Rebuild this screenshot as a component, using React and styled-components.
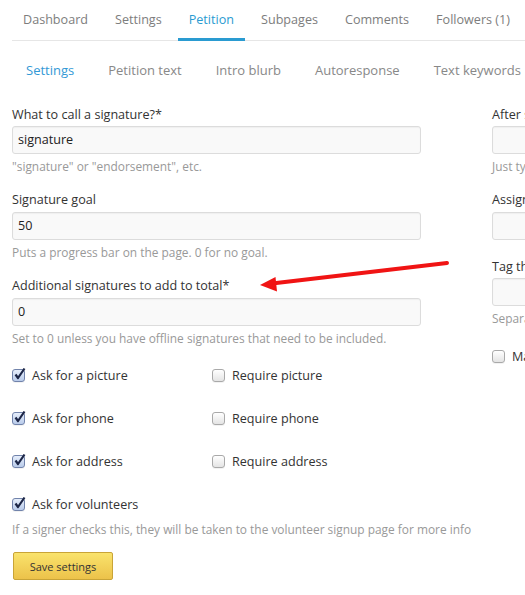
import React from "react";
import styled, { createGlobalStyle } from "styled-components";

const Global = createGlobalStyle`
  html, body { margin: 0; padding: 0; background: #fff; overflow: hidden; }
  body { font-family: "Open Sans", "DejaVu Sans", sans-serif; color: #333; width: 525px; height: 595px; }
  * { box-sizing: border-box; }
`;

const Page = styled.div`
  position: relative;
  width: 525px;
  height: 595px;
  overflow: hidden;
`;

const Nav = styled.div`
  display: flex;
  margin-left: 12px;
  height: 41px;
  border-bottom: 1px solid #e6e6e6;
  white-space: nowrap;
`;

const Tab = styled.div`
  flex: none;
  height: 41px;
  margin-bottom: -1px;
  margin-right: 5px;
  padding: 2px 11px 0;
  font-size: 12.6px;
  line-height: 36px;
  color: ${(p) => (p.$active ? "#2a9bd1" : "#7d7d7d")};
  border-bottom: 3px solid ${(p) => (p.$active ? "#2a9bd1" : "transparent")};
`;

const SubNav = styled.div`
  display: flex;
  padding: 19px 0 0 9px;
  height: 39px;
  white-space: nowrap;
`;

const SubTab = styled.div`
  flex: none;
  padding: 0 17px;
  font-size: 13px;
  line-height: 20px;
  color: ${(p) => (p.$active ? "#3399d6" : "#888")};
`;

const Columns = styled.div`
  display: grid;
  grid-template-columns: 409px 409px;
  column-gap: 71px;
  padding: 25px 0 0 12px;
`;

const Column = styled.div`
  display: flex;
  flex-direction: column;
`;

const Field = styled.div`
  display: flex;
  flex-direction: column;
  margin-bottom: ${(p) => p.$mb ?? 15}px;
`;

const Label = styled.div`
  font-size: 12.6px;
  line-height: 20px;
  color: #333;
  margin-bottom: ${(p) => p.$mb ?? 1}px;
  white-space: nowrap;
`;

const Input = styled.div`
  height: 28px;
  border: 1px solid #dcdcdc;
  border-radius: 3px;
  background: #f9f9f9;
  box-shadow: inset 0 1px 1px rgba(0, 0, 0, 0.04);
  padding: 0 0 0 5px;
  font-size: 12.6px;
  line-height: 26px;
  color: #222;
`;

const Help = styled.div`
  margin-top: 3px;
  font-size: 11.9px;
  line-height: 18px;
  color: #999;
  white-space: nowrap;
`;

const CheckGrid = styled.div`
  display: grid;
  grid-template-columns: 200px 200px;
  row-gap: 23px;
  margin-top: 3px;
`;

const CheckItem = styled.label`
  display: flex;
  align-items: center;
  gap: 7px;
  height: 20px;
  font-size: 12.6px;
  color: #333;
  white-space: nowrap;
`;

const Box = styled.span`
  flex: none;
  position: relative;
  width: 13px;
  height: 13px;
  border-radius: 3px;
  border: 1px solid ${(p) => (p.$checked ? "#7183ab" : "#a9a9a9")};
  background: ${(p) =>
    p.$checked
      ? "linear-gradient(#e6eefb, #b9cbea)"
      : "linear-gradient(#ffffff, #e4e4e4)"};
  box-shadow: 0 1px 0 rgba(0, 0, 0, 0.05);
  svg {
    position: absolute;
    left: 0px;
    top: -3px;
  }
`;

const Check = ({ checked }) => (
  <Box $checked={checked}>
    {checked && (
      <svg width="13" height="14" viewBox="0 0 13 14">
        <path d="M2.5 7.5 L5 11 L11.5 1.5" fill="none" stroke="#1c2647" strokeWidth="2.2" strokeLinejoin="round" />
      </svg>
    )}
  </Box>
);

const Volunteer = styled.div`
  margin-top: 23px;
  display: flex;
  flex-direction: column;
`;

const VolHelp = styled(Help)`
  margin-top: 6px;
`;

const Button = styled.button`
  margin-top: 14px;
  align-self: flex-start;
  margin-left: 1px;
  width: 100px;
  height: 28px;
  border: 1px solid #c9a437;
  border-radius: 2px;
  background: linear-gradient(#f9e36c, #ecc24a);
  font-family: "Open Sans", "DejaVu Sans", sans-serif;
  font-size: 11px;
  color: #333;
  padding: 0;
  cursor: pointer;
`;

const RightCheck = styled(CheckItem)`
  margin-top: 7px;
`;

const Arrow = styled.svg`
  position: absolute;
  left: 0;
  top: 0;
  pointer-events: none;
`;

export default function App() {
  const tabs = ["Dashboard", "Settings", "Petition", "Subpages", "Comments", "Followers (1)"];
  const sub = ["Settings", "Petition text", "Intro blurb", "Autoresponse", "Text keywords"];
  return (
    <Page>
      <Global />
      <Nav>
        {tabs.map((t) => (
          <Tab key={t} $active={t === "Petition"}>{t}</Tab>
        ))}
      </Nav>
      <SubNav>
        {sub.map((t, i) => (
          <SubTab key={t} $active={i === 0}>{t}</SubTab>
        ))}
      </SubNav>
      <Columns>
        <Column>
          <Field>
            <Label>What to call a signature?*</Label>
            <Input>signature</Input>
            <Help>"signature" or "endorsement", etc.</Help>
          </Field>
          <Field>
            <Label $mb={2}>Signature goal</Label>
            <Input>50</Input>
            <Help>Puts a progress bar on the page. 0 for no goal.</Help>
          </Field>
          <Field>
            <Label $mb={2}>Additional signatures to add to total*</Label>
            <Input>0</Input>
            <Help>Set to 0 unless you have offline signatures that need to be included.</Help>
          </Field>
          <CheckGrid>
            <CheckItem><Check checked />Ask for a picture</CheckItem>
            <CheckItem><Check />Require picture</CheckItem>
            <CheckItem><Check checked />Ask for phone</CheckItem>
            <CheckItem><Check />Require phone</CheckItem>
            <CheckItem><Check checked />Ask for address</CheckItem>
            <CheckItem><Check />Require address</CheckItem>
          </CheckGrid>
          <Volunteer>
            <CheckItem><Check checked />Ask for volunteers</CheckItem>
            <VolHelp>If a signer checks this, they will be taken to the volunteer signup page for more info</VolHelp>
            <Button>Save settings</Button>
          </Volunteer>
        </Column>
        <Column>
          <Field>
            <Label>After signing, redirect to</Label>
            <Input />
            <Help>Just type the address of the page</Help>
          </Field>
          <Field $mb={17}>
            <Label $mb={2}>Assign signers to a list</Label>
            <Input />
          </Field>
          <Field $mb={12}>
            <Label>Tag the signers</Label>
            <Input />
            <Help>Separate tags with commas</Help>
          </Field>
          <RightCheck><Check />Make signatures public</RightCheck>
        </Column>
      </Columns>
      <Arrow width="525" height="595" viewBox="0 0 525 595">
        <line x1="447" y1="263" x2="272" y2="283.5" stroke="#f01414" strokeWidth="4" strokeLinecap="round" />
        <polygon points="260,285 275.5,277 277,291.5" fill="#f01414" />
      </Arrow>
    </Page>
  );
}
